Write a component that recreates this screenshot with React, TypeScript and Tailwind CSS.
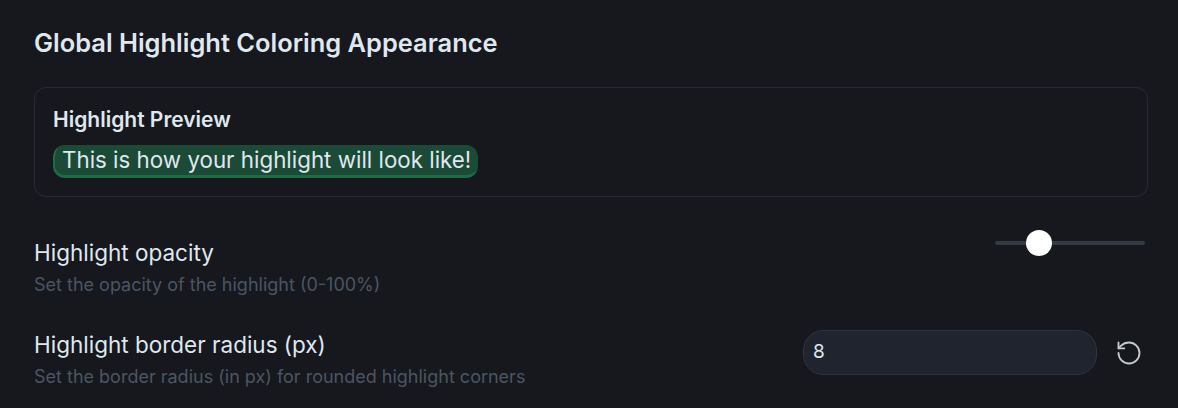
import { RotateCcw } from 'lucide-react';

const App = () => {
  return (
    <div className="h-[408px] w-[1178px] overflow-hidden bg-[#16181d] px-[34px] pt-[27px] font-['Inter',sans-serif]">
      <h2 className="text-[25.45px] leading-[32px] font-semibold text-[#dfe7ef]">
        Global Highlight Coloring Appearance
      </h2>

      <div className="mt-[28px] h-[110px] w-[1114px] rounded-[12px] border border-[#262b33] px-[18px] pt-[18px]">
        <h4 className="text-[21px] leading-[28px] font-semibold text-[#dfe7ef]">Highlight Preview</h4>
        <div className="mt-[11px] flex">
          <span className="rounded-[12px] border-b-[3px] border-l-[2px] border-[#1f6b45] bg-[#1b4a36] pl-[7px] pr-[7px] text-[22.35px] leading-[30px] text-[#dfe7ef]">
            This is how your highlight will look like!
          </span>
        </div>
      </div>

      <div className="mt-[41px] flex h-[64px] w-[1114px] items-start justify-between">
        <div>
          <div className="text-[22.5px] leading-[30px] text-[#dfe7ef]">Highlight opacity</div>
          <div className="mt-[5px] text-[18px] leading-[24px] text-[#4b5563]">
            Set the opacity of the highlight (0-100%)
          </div>
        </div>
        <div className="relative mt-[3px] mr-[3px] h-[4px] w-[150px] rounded-full bg-[#323a42]">
          <div className="absolute top-[-11px] left-[31px] h-[26px] w-[26px] rounded-full bg-white" />
        </div>
      </div>

      <div className="mt-[28px] flex w-[1114px] items-start justify-between">
        <div>
          <div className="text-[22.5px] leading-[30px] text-[#dfe7ef]">Highlight border radius (px)</div>
          <div className="mt-[5px] text-[18px] leading-[24px] text-[#4b5563]">
            Set the border radius (in px) for rounded highlight corners
          </div>
        </div>
        <div className="mr-[1px] flex items-center">
          <div className="flex h-[45px] w-[294px] items-center rounded-[20px] border border-[#2e343d] bg-[#20242e] px-[9px] text-[19px] text-[#dfe7ef]">
            8
          </div>
          <div className="ml-[18px] flex w-[28px] justify-center text-[#c4c9cc]">
            <RotateCcw size={28} strokeWidth={1.6} />
          </div>
          <div className="w-[4px]" />
        </div>
      </div>
    </div>
  );
};

export default App;
